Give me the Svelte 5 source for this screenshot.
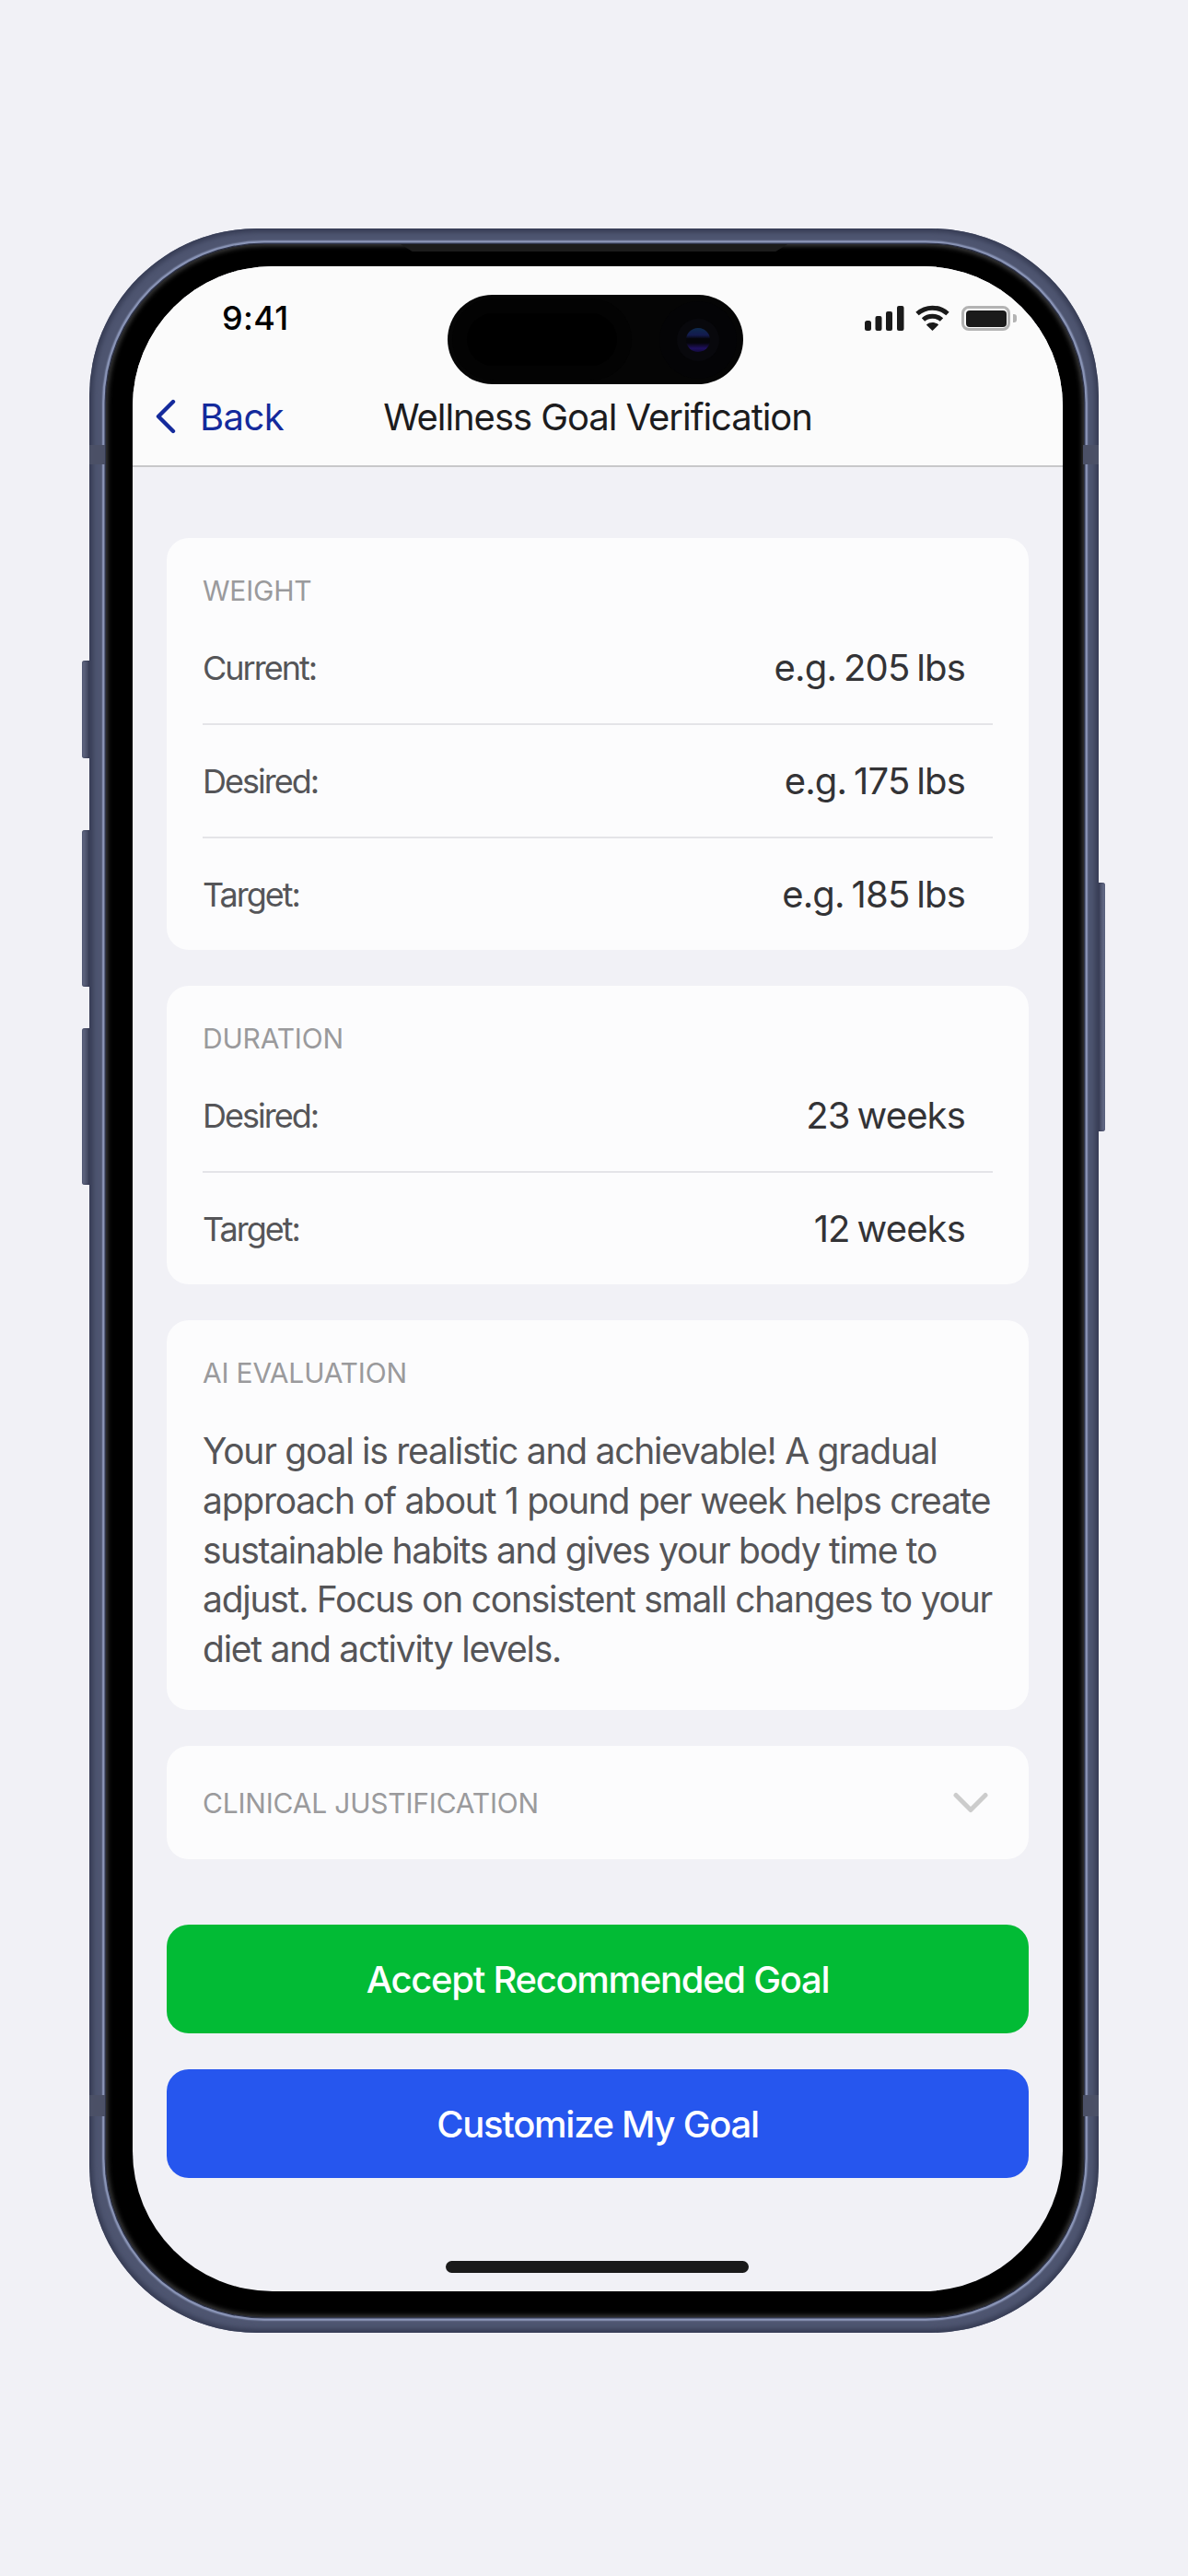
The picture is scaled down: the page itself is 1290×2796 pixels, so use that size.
<script>
  const weight = [
    { label: 'Current:', value: 'e.g. 205 lbs' },
    { label: 'Desired:', value: 'e.g. 175 lbs' },
    { label: 'Target:', value: 'e.g. 185 lbs' }
  ];
  const duration = [
    { label: 'Desired:', value: '23 weeks' },
    { label: 'Target:', value: '12 weeks' }
  ];
</script>

<div class="page">
  <div class="phone">
    <span class="key mute"></span>
    <span class="key volup"></span>
    <span class="key voldown"></span>
    <span class="key power"></span>
    <div class="bezel">
      <span class="speaker"></span>
      <div class="screen">
        <div class="island">
          <span class="sensor"></span>
          <span class="cam"><span class="cam2"><span class="lens"></span></span></span>
        </div>
        <header class="header">
          <div class="status">
            <span class="time">9:41</span>
            <div class="status-icons">
              <svg class="signal" width="43" height="27" viewBox="0 0 43 27" fill="#1a1a1a">
                <rect x="0" y="16" width="7" height="11" rx="2.5" />
                <rect x="11.5" y="11" width="7" height="16" rx="2" />
                <rect x="23" y="6" width="7" height="21" rx="2" />
                <rect x="35" y="0" width="7.5" height="27" rx="2" />
              </svg>
              <svg class="wifi" width="37" height="28" viewBox="0 0 37 28" fill="none" stroke="#1a1a1a" stroke-width="5">
                <path d="M2 9.5C11.5 1 25.5 1 35 9.5" />
                <path d="M8.5 16C14 11 23 11 28.5 16" />
                <path d="M18.5 28L11.8 21.5C15.5 18.2 21.5 18.2 25.2 21.5Z" fill="#1a1a1a" stroke="none" />
              </svg>
              <div class="battery"><span class="charge"></span><span class="cap"></span></div>
            </div>
          </div>
          <nav class="nav">
            <div class="back">
              <svg width="23" height="38" viewBox="0 0 23 38" fill="none" stroke="#142a9c" stroke-width="4.4" stroke-linecap="round" stroke-linejoin="round">
                <path d="M20 3L4 19L20 35" />
              </svg>
              <span>Back</span>
            </div>
            <h1>Wellness Goal Verification</h1>
            <div></div>
          </nav>
        </header>

        <main class="content">
          <section class="card">
            <h2>WEIGHT</h2>
            {#each weight as r}
              <div class="row"><span class="k">{r.label}</span><span class="v">{r.value}</span></div>
            {/each}
          </section>
          <section class="card">
            <h2>DURATION</h2>
            {#each duration as r}
              <div class="row"><span class="k">{r.label}</span><span class="v">{r.value}</span></div>
            {/each}
          </section>
          <section class="card ai">
            <h2>AI EVALUATION</h2>
            <p>Your goal is realistic and achievable! A gradual approach of about 1 pound per week helps create sustainable habits and gives your body time to adjust. Focus on consistent small changes to your diet and activity levels.</p>
          </section>
          <section class="card collapsed">
            <h2>CLINICAL JUSTIFICATION</h2>
            <svg width="38" height="24" viewBox="0 0 38 24" fill="none" stroke="#cccccc" stroke-width="5" stroke-linecap="round" stroke-linejoin="round">
              <path d="M3 3.5L19 19.5L35 3.5" />
            </svg>
          </section>
          <div class="actions">
            <button class="btn green">Accept Recommended Goal</button>
            <button class="btn blue">Customize My Goal</button>
          </div>
        </main>
        <div class="home"></div>
      </div>
    </div>
    <span class="band bl1"></span>
    <span class="band br1"></span>
    <span class="band bl2"></span>
    <span class="band br2"></span>
  </div>
</div>

<style>
  :global(body) {
    margin: 0;
    background: #f1f1f6;
  }
  .page {
    height: 2796px;
    padding-top: 248px;
    box-sizing: border-box;
    display: flex;
    justify-content: center;
    align-items: flex-start;
    background: #f1f1f6;
    font-family: Inter, "Liberation Sans", sans-serif;
    overflow: hidden;
  }
  .phone {
    position: relative;
    width: 1096px;
    height: 2284px;
    box-sizing: border-box;
    padding: 17px 16px 17px 18px;
    border-radius: 182px;
    background: #4e5570;
    box-shadow: inset 0 0 5px 4px #383e56;
  }
  .key {
    position: absolute;
    width: 8px;
    background: linear-gradient(90deg, #666d88, #3c4159);
    box-shadow: inset 0 0 2px #2b3049;
  }
  .mute { left: -8px; top: 469px; height: 106px; border-radius: 3px 0 0 3px; }
  .volup { left: -8px; top: 653px; height: 170px; border-radius: 3px 0 0 3px; }
  .voldown { left: -8px; top: 868px; height: 170px; border-radius: 3px 0 0 3px; }
  .power {
    right: -7px;
    top: 710px;
    height: 270px;
    width: 7px;
    border-radius: 0 3px 3px 0;
    background: linear-gradient(90deg, #3c4159, #6e7693);
  }
  .band {
    position: absolute;
    width: 17px;
    height: 21px;
    background: #4b5066;
  }
  .bl1 { left: 0; top: 235px; }
  .br1 { right: 0; top: 235px; }
  .bl2 { left: 0; top: 2026px; height: 23px; }
  .br2 { right: 0; top: 2026px; height: 23px; }
  .bezel {
    position: relative;
    height: 100%;
    box-sizing: border-box;
    padding: 24px 23px 28px 29px;
    border-radius: 172px;
    background: #000;
    box-shadow: 0 0 0 1.5px #30354a, 0 0 1.5px 4px #8d98ba, inset 0 0 5px 2px #3c3c3c;
  }
  .speaker {
    position: absolute;
    left: 320px;
    top: 0;
    width: 420px;
    height: 8px;
    background: #1b1b1b;
    clip-path: polygon(0 0, 100% 0, 97% 100%, 3% 100%);
  }
  .screen {
    position: relative;
    height: 100%;
    border-radius: 152px;
    overflow: hidden;
    background: #f1f1f6;
    display: flex;
    flex-direction: column;
  }
  .island {
    position: absolute;
    left: 342px;
    top: 31px;
    width: 321px;
    height: 97px;
    border-radius: 49px;
    background: #050505;
  }
  .sensor {
    position: absolute;
    left: 21px;
    top: 20px;
    width: 163px;
    height: 57px;
    border-radius: 29px;
    background: #000;
    box-shadow: 0 0 0 16px #030303;
  }
  .cam {
    position: absolute;
    left: 230px;
    top: 7px;
    width: 84px;
    height: 84px;
    border-radius: 50%;
    background: #040406;
    display: flex;
    align-items: center;
    justify-content: center;
  }
  .cam2 {
    width: 46px;
    height: 46px;
    border-radius: 50%;
    background: #08080c;
    display: flex;
    align-items: center;
    justify-content: center;
  }
  .lens {
    width: 26px;
    height: 26px;
    border-radius: 50%;
    background: linear-gradient(180deg, #0e2a4e 0%, #131a4e 30%, #05050a 45%, #05050a 62%, #1f1060 85%, #120a3a 100%);
  }
  .header {
    background: #fbfbfb;
    border-bottom: 2px solid #c8c8ca;
    height: 218px;
    box-sizing: border-box;
    flex: none;
  }
  .status {
    height: 110px;
    box-sizing: border-box;
    padding: 36px 51px 0 97px;
    display: flex;
    justify-content: space-between;
    align-items: flex-start;
  }
  .time {
    font-size: 36px;
    line-height: 40px;
    font-weight: 500;
    letter-spacing: 0.3px;
    color: #000;
  }
  .status-icons {
    display: flex;
    align-items: flex-start;
    gap: 12px;
    padding-top: 7px;
  }
  .wifi { margin-top: -1px; }
  .battery {
    position: relative;
    width: 53px;
    height: 27px;
    box-sizing: border-box;
    border: 3px solid #b3b3b3;
    border-radius: 8px;
    padding: 1.5px;
    margin-left: 1px;
    margin-right: 6px;
  }
  .charge {
    display: block;
    height: 100%;
    border-radius: 4px;
    background: #1a1a1a;
  }
  .cap {
    position: absolute;
    right: -10px;
    top: 6px;
    width: 4px;
    height: 9px;
    border-radius: 0 3px 3px 0;
    background: #b3b3b3;
  }
  .nav {
    height: 106px;
    display: grid;
    grid-template-columns: 1fr auto 1fr;
    align-items: center;
  }
  .back {
    display: flex;
    align-items: center;
    gap: 26px;
    padding-left: 24px;
    font-size: 40px;
    color: #142a9c;
    letter-spacing: -0.6px;
  }
  h1 {
    margin: 0;
    font-size: 40px;
    font-weight: 400;
    color: #1c1c1e;
    letter-spacing: -1.05px;
  }
  .content {
    padding: 77px 37px 0;
    display: flex;
    flex-direction: column;
    gap: 39px;
  }
  .card {
    background: #fcfcfd;
    border-radius: 24px;
    padding: 39px 39px 0;
  }
  h2 {
    margin: 0;
    font-size: 30px;
    line-height: 36px;
    font-weight: 400;
    color: #9a9a9c;
    letter-spacing: -0.2px;
  }
  .row {
    height: 121px;
    padding-right: 30px;
    display: flex;
    justify-content: space-between;
    align-items: center;
    border-bottom: 2px solid #e4e4e8;
    box-sizing: content-box;
  }
  h2 + .row { margin-top: 5px; }
  .row:last-child { border-bottom: none; }
  .k {
    font-size: 36px;
    color: #555558;
    letter-spacing: -2px;
  }
  .v {
    font-size: 40px;
    color: #333336;
    letter-spacing: -0.85px;
    word-spacing: -2.5px;
  }
  .ai { height: 423px; box-sizing: border-box; }
  .ai p {
    margin: 40px 0 0;
    font-size: 39px;
    line-height: 53.8px;
    color: #555558;
    letter-spacing: -1.25px;
  }
  .collapsed {
    height: 123px;
    box-sizing: border-box;
    padding: 0 44px 0 39px;
    display: flex;
    align-items: center;
    justify-content: space-between;
  }
  .actions {
    margin-top: 32px;
    display: flex;
    flex-direction: column;
    gap: 39px;
  }
  .btn {
    height: 118px;
    border: none;
    border-radius: 24px;
    color: #fff;
    font-family: inherit;
    font-size: 40px;
    font-weight: 500;
    letter-spacing: -1.3px;
    padding: 0;
  }
  .green { background: #02bb35; }
  .blue { background: #2656ee; }
  .home {
    position: absolute;
    left: 340px;
    bottom: 20px;
    width: 329px;
    height: 13px;
    border-radius: 7px;
    background: #1a1a1a;
  }
</style>
